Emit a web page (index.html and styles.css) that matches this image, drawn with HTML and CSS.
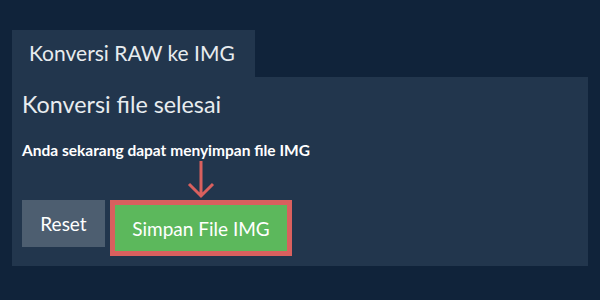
FILE: index.html
```html
<!DOCTYPE html>
<html lang="id">
<head>
  <meta charset="UTF-8">
  <title>Konversi RAW ke IMG</title>
  <link rel="stylesheet" href="styles.css">
</head>
<body>
  <div class="Wrap">
    <div class="Tab">Konversi RAW ke IMG</div>
    <div class="Panel">
      <h2 class="Heading">Konversi file selesai</h2>
      <p class="Note">Anda sekarang dapat menyimpan file IMG</p>
      <div class="Buttons">
        <button class="resetButton">Reset</button>
        <div class="saveBox">
          <svg class="Arrow" width="30" height="38" viewBox="0 0 30 38">
            <path d="M15 0 V35 M3 23 L15 35 L27 23" fill="none" stroke="#d9605e" stroke-width="3"/>
          </svg>
          <button class="saveButton">Simpan File IMG</button>
        </div>
      </div>
    </div>
  </div>
</body>
</html>
```

FILE: styles.css
```css
body{
  margin: 0;
  background-color: #10233a;
  font-family: Lato, "Open Sans", sans-serif;
  color: #ffffff;
}
.Wrap{
  padding: 30px 12px 34px 12px;
}
.Tab{
  display: inline-block;
  background-color: #22364d;
  font-size: 21px;
  padding: 9px 20px 11px 17px;
  line-height: 27px;
  color: #e8ecef;
}
.Panel{
  background-color: #22364d;
  padding: 12px 10px 10px 10px;
}
.Heading{
  font-size: 23.3px;
  font-weight: normal;
  margin: 0;
  line-height: 30px;
  color: #e8ecef;
}
.Note{
  font-size: 15.5px;
  font-weight: bold;
  margin: 22px 0 0 0;
  line-height: 18px;
}
.Buttons{
  display: flex;
  align-items: flex-start;
  gap: 5px;
  margin-top: 41px;
}
.resetButton{
  background-color: #4d5e70;
  color: #ffffff;
  border: none;
  font-family: inherit;
  font-size: 19px;
  width: 83px;
  height: 47px;
}
.saveBox{
  position: relative;
}
.Arrow{
  position: absolute;
  left: 76px;
  top: -39px;
}
.saveButton{
  background-color: #5cb85c;
  color: #ffffff;
  border: 5px solid #d9605e;
  font-family: inherit;
  font-size: 19px;
  width: 182px;
  height: 56px;
}
```
